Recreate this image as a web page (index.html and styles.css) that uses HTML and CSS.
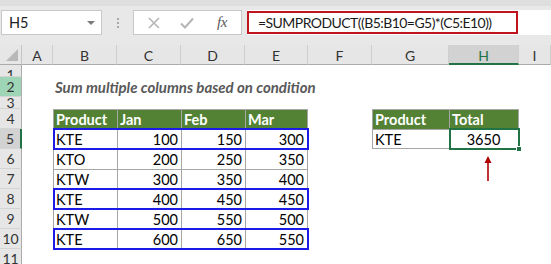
FILE: index.html
```html
<!DOCTYPE html>
<html>
<head>
<meta charset="utf-8">
<link rel="stylesheet" href="styles.css">
</head>
<body>
<div class="app">
  <div class="toolbar">
    <div class="namebox"><span class="ref">H5</span><span class="caret"></span></div>
    <div class="grip"><i></i><i></i><i></i></div>
    <div class="fbtns">
      <svg class="ico" width="14" height="14" viewBox="0 0 14 14"><path d="M2 2L12 12M12 2L2 12" stroke="#b5b5b5" stroke-width="1.6" fill="none"/></svg>
      <svg class="ico" width="16" height="14" viewBox="0 0 16 14"><path d="M2 7.5L6 11.5L14 2.5" stroke="#b5b5b5" stroke-width="2" fill="none"/></svg>
      <span class="fx">fx</span>
    </div>
    <div class="fbar"><div class="formula">=SUMPRODUCT((B5:B10=G5)*(C5:E10))</div></div>
  </div>
  <div class="sheet">
    <div class="corner ch r0"><span class="tri"></span></div>
    <div class="colhd cA r0">A</div>
    <div class="colhd cB r0">B</div>
    <div class="colhd cC r0">C</div>
    <div class="colhd cD r0">D</div>
    <div class="colhd cE r0">E</div>
    <div class="colhd cF r0">F</div>
    <div class="colhd cG r0">G</div>
    <div class="colhd cH r0 sel">H</div>
    <div class="colhd cI r0">I</div>

    <div class="rowhd ch r1 short top">1</div>
    <div class="rowhd ch r2 mint">2</div>
    <div class="rowhd ch r3 short">3</div>
    <div class="rowhd ch r4">4</div>
    <div class="rowhd ch r5 sel">5</div>
    <div class="rowhd ch r6">6</div>
    <div class="rowhd ch r7">7</div>
    <div class="rowhd ch r8">8</div>
    <div class="rowhd ch r9">9</div>
    <div class="rowhd ch r10">10</div>
    <div class="rowhd ch r11">11</div>

    <div class="title cB r2">Sum multiple columns based on condition</div>

    <div class="cell th cB r4">Product</div>
    <div class="cell th cC r4">Jan</div>
    <div class="cell th cD r4">Feb</div>
    <div class="cell th cE r4 last">Mar</div>

    <div class="cell cB r5">KTE</div>
    <div class="cell num cC r5">100</div>
    <div class="cell num cD r5">150</div>
    <div class="cell num cE r5 last">300</div>

    <div class="cell cB r6">KTO</div>
    <div class="cell num cC r6">200</div>
    <div class="cell num cD r6">250</div>
    <div class="cell num cE r6 last">350</div>

    <div class="cell cB r7">KTW</div>
    <div class="cell num cC r7">300</div>
    <div class="cell num cD r7">350</div>
    <div class="cell num cE r7 last">400</div>

    <div class="cell cB r8">KTE</div>
    <div class="cell num cC r8">400</div>
    <div class="cell num cD r8">450</div>
    <div class="cell num cE r8 last">450</div>

    <div class="cell cB r9">KTW</div>
    <div class="cell num cC r9">500</div>
    <div class="cell num cD r9">550</div>
    <div class="cell num cE r9 last">500</div>

    <div class="cell cB r10 bottom">KTE</div>
    <div class="cell num cC r10 bottom">600</div>
    <div class="cell num cD r10 bottom">650</div>
    <div class="cell num cE r10 bottom last">550</div>

    <div class="hl cBE r5"></div>
    <div class="hl cBE r8"></div>
    <div class="hl cBE r10"></div>

    <div class="cell th cG r4">Product</div>
    <div class="cell th cH r4 last">Total</div>
    <div class="cell cG r5 bottom">KTE</div>
    <div class="cell ctr cH r5 bottom last">3650</div>
    <div class="active cH r5"><span class="handle"></span></div>

    <svg class="arrow" width="10" height="25" viewBox="0 0 10 25"><path d="M5 6V25" stroke="#b00000" stroke-width="1.6"/><path d="M5 0L1.5 7H8.5Z" fill="#b00000"/></svg>
  </div>
</div>
</body>
</html>
```

FILE: styles.css
```css
* { box-sizing: border-box; }
html, body { margin: 0; padding: 0; background: #fff; }
body { width: 551px; height: 264px; overflow: hidden; font-family: Lato, "Open Sans", sans-serif; }

.app { width: 551px; height: 264px; display: flex; flex-direction: column; }

.toolbar {
  height: 45px;
  flex: none;
  display: flex;
  align-items: flex-start;
  padding-top: 10px;
  background: linear-gradient(#dedede 0, #dedede 6px, #e8e8e8 6px);
}

.namebox {
  margin-left: 1px;
  width: 101px;
  height: 25px;
  background: #fff;
  border: 1px solid #c8c8c8;
  display: flex;
  align-items: center;
  justify-content: space-between;
  padding: 0 6px 0 7px;
}
.ref { font-size: 14.5px; color: #222; }
.caret { width: 0; height: 0; border-left: 4px solid transparent; border-right: 4px solid transparent; border-top: 4px solid #7a7a7a; }

.grip { width: 31px; height: 25px; display: flex; flex-direction: column; align-items: center; justify-content: center; gap: 2px; }
.grip i { display: block; width: 2px; height: 2px; background: #a8a8a8; }

.fbtns {
  width: 109px;
  height: 25px;
  background: #fff;
  border: 1px solid #c8c8c8;
  display: flex;
  align-items: center;
  padding-left: 13px;
}
.fbtns .ico:first-child { margin-right: 18px; }
.fbtns .ico:nth-child(2) { margin-right: 22px; }
.fx { font-family: "Liberation Serif", serif; font-style: italic; font-size: 15px; color: #5a5a5a; letter-spacing: -0.5px; }

.fbar {
  margin-left: 5px;
  flex: 1;
  height: 25px;
  background: #fff;
  padding-top: 1px;
}
.formula {
  width: 271px;
  height: 23px;
  border: 2px solid #c0151d;
  font-size: 14px;
  letter-spacing: -0.55px;
  color: #1a1a1a;
  padding-left: 9px;
  line-height: 19px;
  white-space: nowrap;
  overflow: hidden;
}

.sheet {
  flex: 1;
  position: relative;
  display: grid;
  grid-template-columns: 22px 31px 64px 64px 64px 63px 64px 77px 70px 1fr;
  grid-template-rows: 20px 12px 20px 12px repeat(7, 20px) 1fr;
  background: #fff;
}

.ch { grid-column: 1; }
.cA { grid-column: 2; }
.cB { grid-column: 3; }
.cC { grid-column: 4; }
.cD { grid-column: 5; }
.cE { grid-column: 6; }
.cF { grid-column: 7; }
.cG { grid-column: 8; }
.cH { grid-column: 9; }
.cI { grid-column: 10; }
.cBE { grid-column: 3 / 7; }

.r0 { grid-row: 1; }
.r1 { grid-row: 2; }
.r2 { grid-row: 3; }
.r3 { grid-row: 4; }
.r4 { grid-row: 5; }
.r5 { grid-row: 6; }
.r6 { grid-row: 7; }
.r7 { grid-row: 8; }
.r8 { grid-row: 9; }
.r9 { grid-row: 10; }
.r10 { grid-row: 11; }
.r11 { grid-row: 12; }

.corner {
  background: #e6e6e6;
  border-right: 1px solid #c4c4c4;
  border-bottom: 1px solid #ababab;
  position: relative;
}
.tri {
  position: absolute;
  right: 3px;
  bottom: 3px;
  width: 0; height: 0;
  border-left: 12px solid transparent;
  border-bottom: 12px solid #b8b8b8;
}

.colhd {
  background: #e6e6e6;
  border-right: 1px solid #cfcfcf;
  border-bottom: 1px solid #ababab;
  display: flex;
  align-items: center;
  justify-content: center;
  font-size: 14px;
  color: #333;
  padding-top: 1px;
}
.colhd.sel {
  background: #d2d2d2;
  color: #217346;
  border-bottom: 2px solid #217346;
  padding-top: 2px;
}

.rowhd {
  background: #e6e6e6;
  border-right: 1px solid #ababab;
  border-bottom: 1px solid #d4d4d4;
  display: flex;
  align-items: flex-end;
  justify-content: center;
  font-size: 14px;
  color: #333;
  line-height: 19px;
  overflow: hidden;
}
.rowhd.short { align-items: flex-start; line-height: 12px; }
.rowhd.top { line-height: 19px; }
.rowhd.mint { background: #9fd5b7; }
.rowhd.sel { background: #d2d2d2; border-right: 2px solid #217346; }

.title {
  grid-column: 3 / 9;
  font-weight: bold;
  font-style: italic;
  font-size: 15px;
  color: #595959;
  white-space: nowrap;
  padding-left: 2px;
  line-height: 20px;
}

.cell {
  border-left: 1px solid #a6a6a6;
  border-top: 1px solid #a6a6a6;
  font-size: 14.5px;
  color: #000;
  line-height: 18px;
  padding: 1px 3px 0 2px;
  white-space: nowrap;
}
.cell.last { border-right: 1px solid #a6a6a6; }
.cell.bottom { border-bottom: 1px solid #a6a6a6; }
.cell.th { background: #548235; color: #fff; font-weight: bold; }
.cell.num { text-align: right; }
.cell.ctr { text-align: center; }

.hl {
  border: 2px solid #1c1ce6;
  margin: -1px -1px -1px 0;
  z-index: 2;
}

.active {
  border: 2px solid #217346;
  margin: -1px -1px -1px 0;
  z-index: 3;
  position: relative;
}
.handle {
  position: absolute;
  right: -4px;
  bottom: -4px;
  width: 6px;
  height: 6px;
  background: #217346;
  border: 1px solid #fff;
}

.arrow {
  position: absolute;
  left: 483px;
  top: 111px;
}
```
